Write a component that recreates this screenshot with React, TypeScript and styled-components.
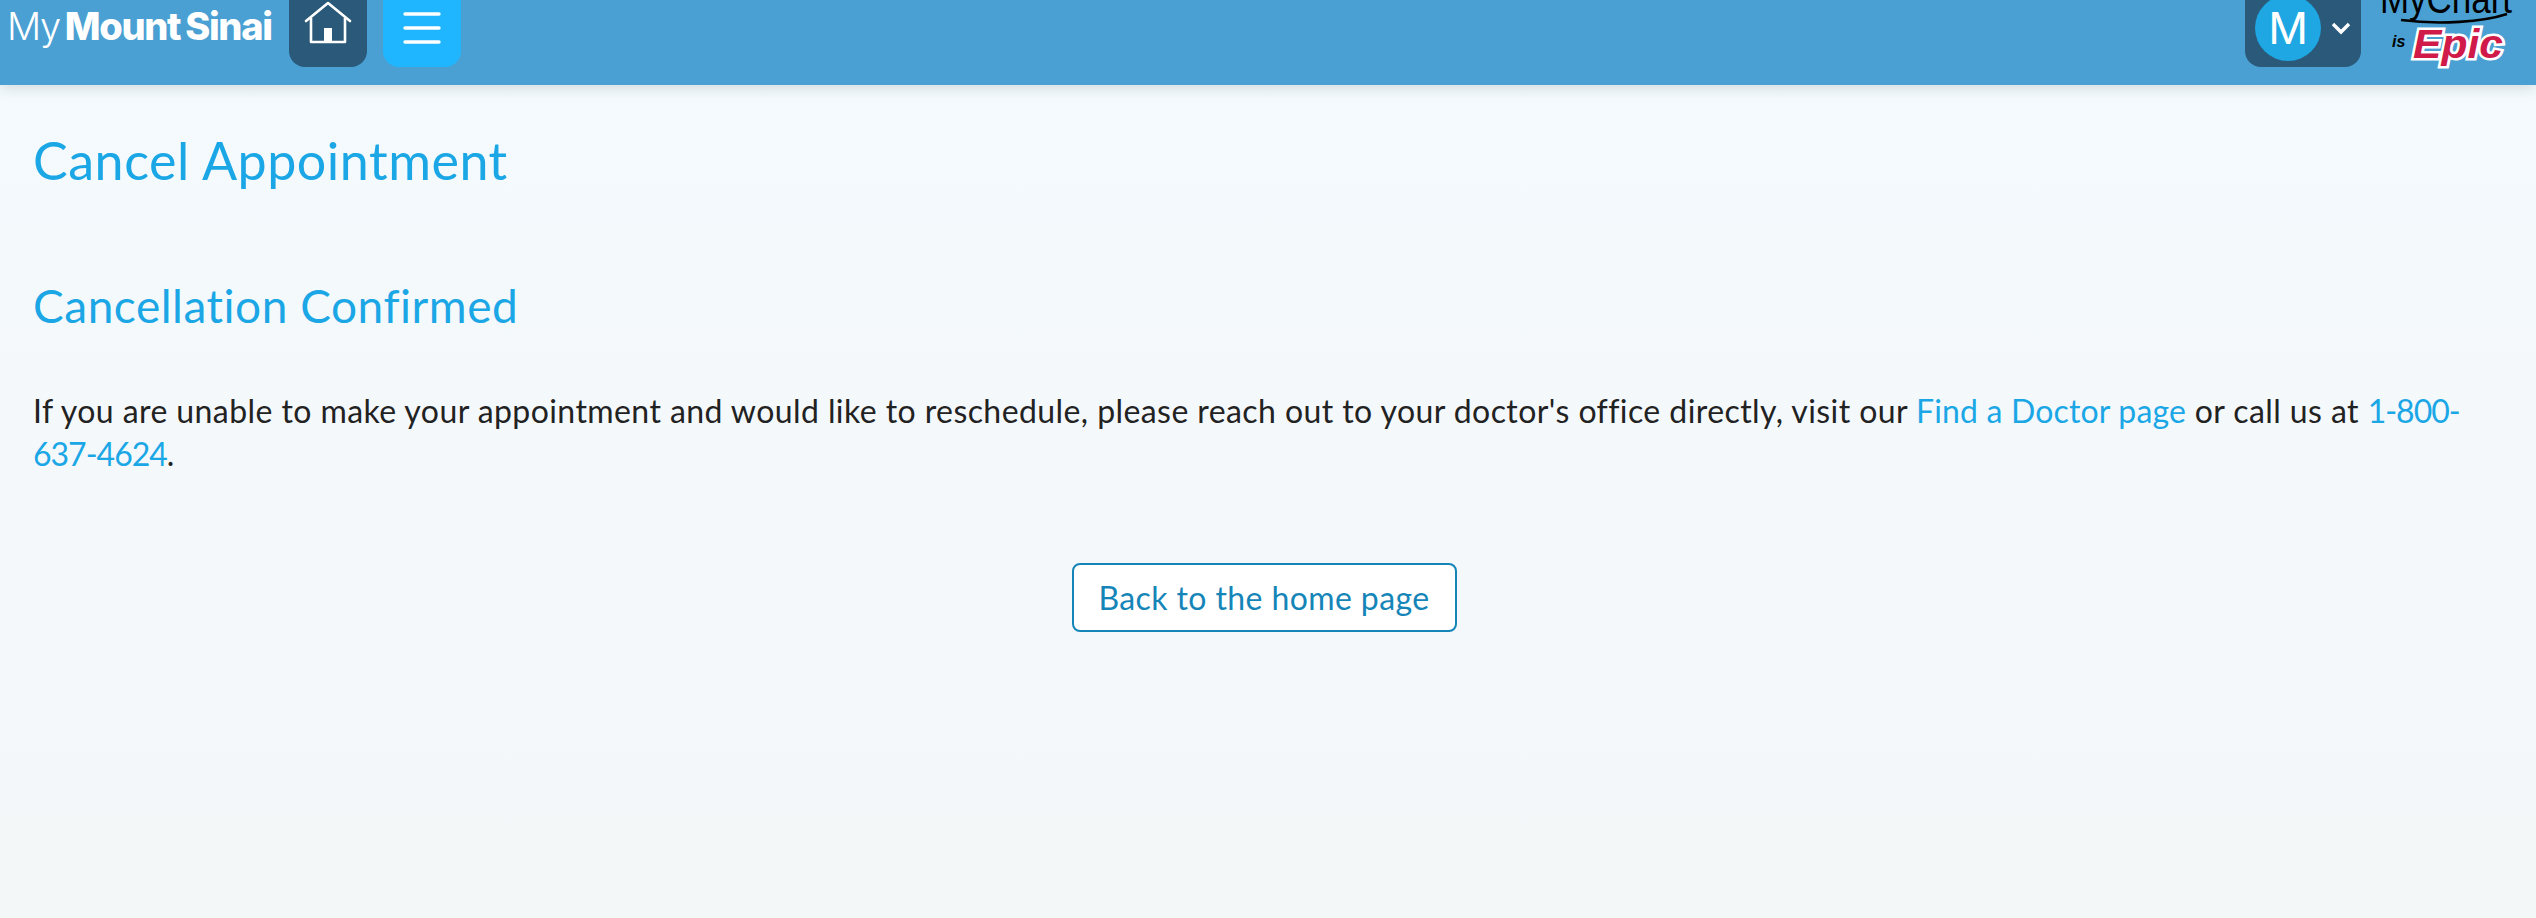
import React from "react";
import styled, { createGlobalStyle } from "styled-components";

const GlobalStyle = createGlobalStyle`
  html, body {
    margin: 0;
    height: 100%;
    overflow: hidden;
  }
  body {
    font-family: Lato, "Noto Sans", Arial, sans-serif;
    color: #222;
  }
`;

const Page = styled.div`
  width: 100%;
  height: 918px;
  display: flex;
  flex-direction: column;
  background: linear-gradient(180deg, #f4fafd 0%, #f4f8fb 60%, #f3f7f8 100%);
`;

const Header = styled.header`
  height: 85px;
  flex: none;
  display: flex;
  align-items: flex-start;
  justify-content: space-between;
  background: #4aa0d3;
  box-shadow: 0 2px 14px rgba(40, 60, 70, 0.18);
  overflow: hidden;
`;

const HeaderSide = styled.div`
  display: flex;
  align-items: flex-start;
`;

const Logo = styled.div`
  width: 289px;
  padding: 4px 0 0 7px;
  box-sizing: border-box;
  font-family: Inter, "Liberation Sans", Arial, sans-serif;
  font-size: 38px;
  font-weight: 300;
  line-height: 44px;
  letter-spacing: -1.35px;
  color: #fff;
  white-space: nowrap;
`;

const LogoBold = styled.b`
  font-weight: 800;
  margin-left: 5px;
`;

const LogoWord = styled.b`
  font-weight: 800;
  margin-left: 5px;
`;

const NavButton = styled.div<{ $bg: string }>`
  width: 78px;
  height: 67px;
  margin-right: 16px;
  display: flex;
  align-items: flex-start;
  justify-content: center;
  background: ${({ $bg }) => $bg};
  border-radius: 0 0 16px 16px;
`;

const UserPill = styled.div`
  width: 116px;
  height: 67px;
  margin-right: 18px;
  padding-left: 10px;
  box-sizing: border-box;
  display: flex;
  align-items: flex-start;
  background: #2a5979;
  border-radius: 0 0 16px 16px;
`;

const Avatar = styled.div`
  width: 66px;
  height: 66px;
  margin-top: -5px;
  flex: none;
  border-radius: 50%;
  background: #1ea7e3;
  color: #fff;
  font-family: Inter, "Liberation Sans", Arial, sans-serif;
  font-size: 44px;
  font-weight: 400;
  line-height: 67px;
  text-align: center;
`;

const Chevron = styled.svg`
  width: 20px;
  height: 14px;
  margin: 21px 0 0 10px;
`;

const BrandMark = styled.svg`
  width: 134px;
  height: 85px;
  margin-right: 23px;
  display: block;
`;

const Main = styled.main`
  padding: 0 33px;
  letter-spacing: 0.52px;
`;

const Title = styled.h1`
  margin: 39px 0 0;
  font-size: 52px;
  line-height: 72px;
  font-weight: 400;
  color: #1ba7e6;
`;

const Subtitle = styled.h2`
  margin: 79px 0 0;
  font-size: 46px;
  line-height: 62px;
  font-weight: 400;
  color: #1ba7e6;
`;

const Message = styled.p`
  margin: 52px 0 0;
  font-size: 32px;
  line-height: 43px;
  letter-spacing: 0.42px;
`;

const TextLink = styled.a<{ $tracking: string }>`
  color: #1ba7e6;
  text-decoration: none;
  letter-spacing: ${({ $tracking }) => $tracking};
`;

const Actions = styled.div`
  display: flex;
  justify-content: center;
  margin-top: 88px;
`;

const BackButton = styled.button`
  width: 385px;
  height: 69px;
  margin-right: 8px;
  padding: 0;
  box-sizing: border-box;
  background: #fff;
  border: 2px solid #1585b8;
  border-radius: 8px;
  color: #1585b8;
  font-family: inherit;
  font-size: 32px;
  letter-spacing: 0.4px;
`;

export default function App() {
  return (
    <>
      <GlobalStyle />
      <Page>
        <Header>
          <HeaderSide>
            <Logo>
              My<LogoBold>Mount</LogoBold>
              <LogoWord>Sinai</LogoWord>
            </Logo>
            <NavButton $bg="#2a5979">
              <svg width="48" height="46" viewBox="0 0 48 46" fill="none" stroke="#fff" strokeWidth="2.6">
                <path d="M2 21 L24 3 L46 21" strokeLinecap="round" strokeLinejoin="round" />
                <path d="M7 18 V42 H41 V18" strokeLinejoin="round" />
                <path d="M20 42 V28 H28 V42 Z" fill="#fff" stroke="none" />
              </svg>
            </NavButton>
            <NavButton $bg="#1fb6ff">
              <svg width="40" height="46" viewBox="0 0 40 46" fill="none" stroke="#fff" strokeWidth="3.4" strokeLinecap="round">
                <path d="M3 14 H37" />
                <path d="M3 28 H37" />
                <path d="M3 42 H37" />
              </svg>
            </NavButton>
          </HeaderSide>
          <HeaderSide>
            <UserPill>
              <Avatar>M</Avatar>
              <Chevron viewBox="0 0 20 14" fill="none" stroke="#fff" strokeWidth="3.4">
                <path d="M2 3 L10 11 L18 3" />
              </Chevron>
            </UserPill>
            <BrandMark viewBox="0 0 134 85">
              <text x="1" y="13" fontFamily="Liberation Sans, sans-serif" fontSize="40" fill="#000" textLength="132" lengthAdjust="spacingAndGlyphs">
                MyChart
              </text>
              <path d="M22 20 C60 25 104 22 128 14" fill="none" stroke="#000" strokeWidth="2.6" />
              <text x="13" y="47" fontFamily="Liberation Sans, sans-serif" fontSize="16" fontStyle="italic" fontWeight="700" fill="#000">
                is
              </text>
              <text
                x="34"
                y="58"
                fontFamily="Liberation Sans, sans-serif"
                fontSize="40"
                fontStyle="italic"
                fontWeight="700"
                fill="#cf1a4a"
                stroke="#fff"
                strokeWidth="5"
                paintOrder="stroke"
                textLength="90"
                lengthAdjust="spacingAndGlyphs"
              >
                Epic
              </text>
            </BrandMark>
          </HeaderSide>
        </Header>
        <Main>
          <Title>Cancel Appointment</Title>
          <Subtitle>Cancellation Confirmed</Subtitle>
          <Message>
            If you are unable to make your appointment and would like to reschedule, please reach out to your doctor's
            office directly, visit our{" "}
            <TextLink href="#" $tracking="0.16px">
              Find a Doctor page
            </TextLink>{" "}
            or call us at{" "}
            <TextLink href="#" $tracking="-1px">
              1-800-637-4624
            </TextLink>
            .
          </Message>
          <Actions>
            <BackButton>Back to the home page</BackButton>
          </Actions>
        </Main>
      </Page>
    </>
  );
}
